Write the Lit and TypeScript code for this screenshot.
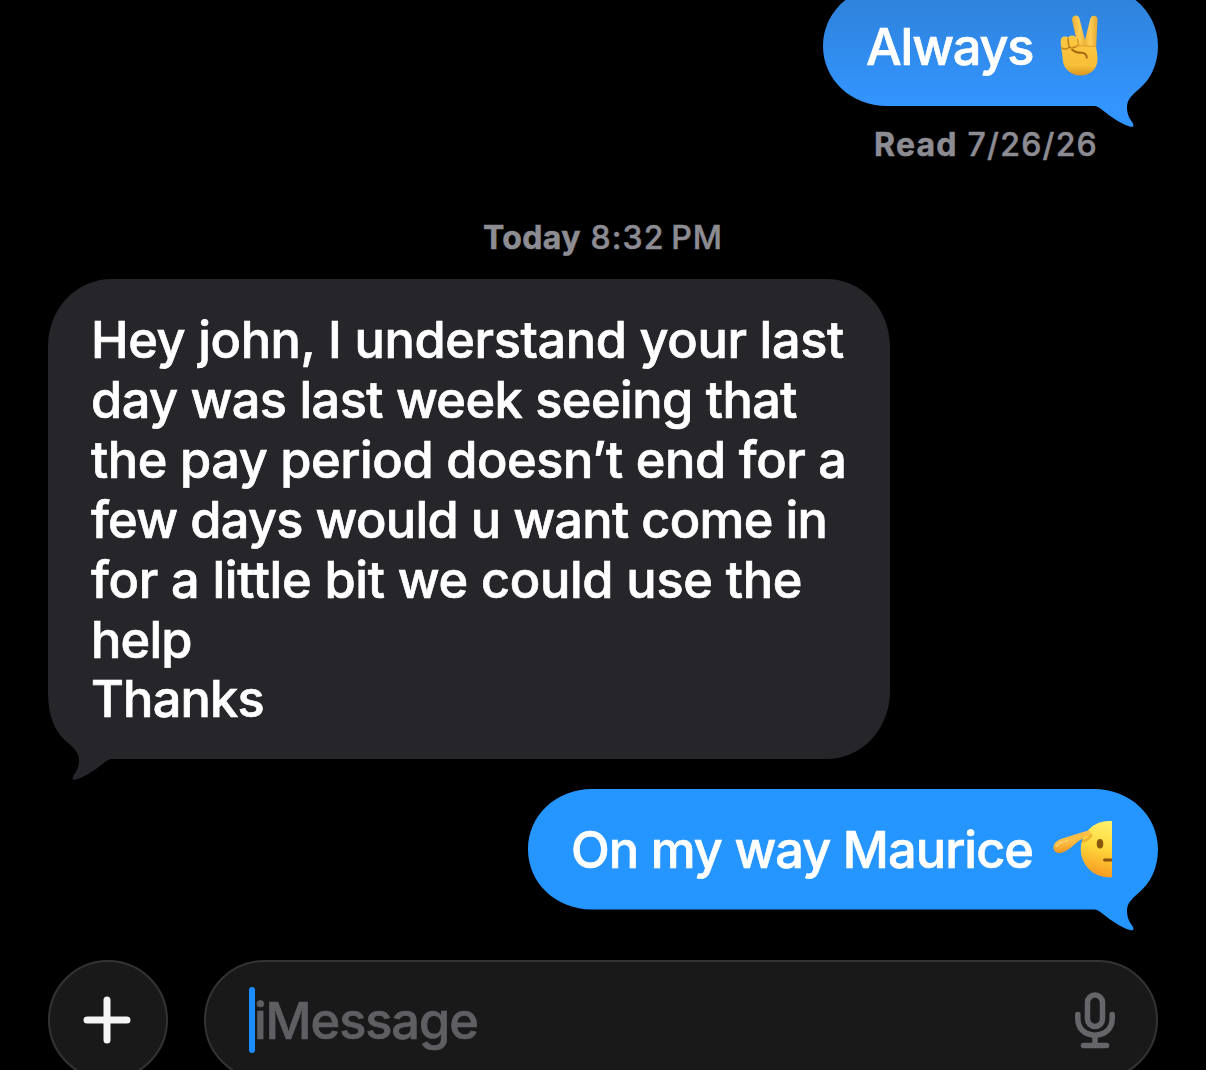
import { LitElement, html, svg, css, nothing } from 'lit';
import { customElement, property } from 'lit/decorators.js';
import { styleMap } from 'lit/directives/style-map.js';

interface Line {
  text: string;
  // tracking in px
  spacing: number;
}

const victory = svg`
  <defs>
    <linearGradient id="skin" x1="0" y1="0" x2="0" y2="1">
      <stop offset="0" stop-color="#fbc843" />
      <stop offset="0.75" stop-color="#f8bf38" />
      <stop offset="1" stop-color="#d99422" />
    </linearGradient>
    <linearGradient id="finger" x1="0" y1="0" x2="1" y2="0">
      <stop offset="0" stop-color="#ecaf35" />
      <stop offset="0.5" stop-color="#fdce55" />
      <stop offset="1" stop-color="#e8a830" />
    </linearGradient>
  </defs>
  <path d="M24 38L31.300 8.800c.6-2.200 2-3.300 4.100-3.100s3.300 1.900 3.100 4.200L37 41z" fill="url(#finger)" />
  <path d="M13.200 10.500c-.5-2.500.6-4.300 2.600-4.800s4 .6 4.700 3L28 38l-8.500 1z" fill="url(#finger)" />
  <path d="M1.700 31.500c0-3.200 1.300-4.900 4.100-4.900 1.400 0 2.400.3 3.300 1 .9-1.500 2.200-2.200 3.900-2.200 2.700 0 4.400 1.200 5.100 3.600l1.400 6.500 17 .5c1.300 3.500 2 8.500 2 13.500C38.500 59.500 30.500 65.500 21.500 65.500S4.500 59.500 3.800 50C3.500 44 1.900 39 1.700 31.500z" fill="url(#skin)" />
  <path d="M9.200 28.500c-.5 2.700 0 5.500 1 8.300M3 38c2 1.400 5 1.400 7.200-.7 2.900.7 6.500.4 8.300-1.800" fill="none" stroke="#b87818" stroke-width="1.400" stroke-linecap="round" />
  <path d="M18.600 29.500l1.300 6" fill="none" stroke="#d9921b" stroke-width="1.200" stroke-linecap="round" />
  <path d="M12.500 37.500c3-2 7-1.900 10.500-1.700 5 .3 9 .9 13.500.2" fill="none" stroke="#dfa02a" stroke-width="1.100" stroke-linecap="round" />
  <path d="M13 39.500c2.700 2.800 6 3.300 9.500 3.300 3.500.1 5 1.700 5.300 4.900" fill="none" stroke="#a56a14" stroke-width="2" stroke-linecap="round" />
`;

// Only the left half of the face is shown, cut along a straight edge.
const salute = svg`
  <defs>
    <linearGradient id="face" x1="0.4" y1="0" x2="0.15" y2="1">
      <stop offset="0" stop-color="#fff06a" />
      <stop offset="0.45" stop-color="#ffd83c" />
      <stop offset="1" stop-color="#f8931e" />
    </linearGradient>
    <linearGradient id="arm" x1="0.3" y1="0" x2="0.5" y2="1">
      <stop offset="0" stop-color="#ffc24a" />
      <stop offset="0.55" stop-color="#fdbb42" />
      <stop offset="1" stop-color="#e98f1b" />
    </linearGradient>
    <clipPath id="half"><rect width="60" height="72" /></clipPath>
  </defs>
  <g clip-path="url(#half)">
    <circle cx="57" cy="35.200" r="28.300" fill="url(#face)" />
    <ellipse cx="48" cy="29.800" rx="3.300" ry="4.800" fill="#8a560c" />
    <path d="M52.500 46h10" stroke="#8a500f" stroke-width="2.800" stroke-linecap="round" />
  </g>
  <path d="M31 27c3.500-.7 6.300-2.700 8-6" fill="none" stroke="#e08a1a" stroke-width="3" stroke-linecap="round" opacity="0.5" />
  <path d="M1.500 33.500C1.500 29 5.500 26 11 24.300L21.500 21l13-4c2.200-.6 3.500-.3 3.900.8.500 1.500-.4 3-2.400 3.900-3.200 1.500-6 3-8.500 4.800-4 3-7 6-11 8.800-2.600 1.900-5.300 3.600-8.500 3.700-3.900.1-6.500-1.800-6.500-5.500z" fill="url(#arm)" />
  <path d="M4.500 32.500c2-3.500 6.500-5 11-5.800" fill="none" stroke="#ffdc80" stroke-width="1.800" stroke-linecap="round" opacity="0.6" />
`;

/**
 * @slot - Trailing emoji
 */
@customElement('message-bubble')
export class MessageBubble extends LitElement {
  static override styles = css`
    :host {
      position: relative;
      display: block;
      box-sizing: border-box;
      padding: 31px 43px 0;
      color: #fff;
    }

    .shape {
      position: absolute;
      inset: 0;
      overflow: visible;
    }

    .text {
      position: relative;
      display: flex;
      align-items: flex-start;
      justify-content: space-between;
    }

    .line {
      display: block;
      font-size: 50.5px;
      font-weight: 500;
      line-height: 59.9px;
      white-space: nowrap;
      -webkit-text-stroke: 0.7px currentColor;
    }
  `;

  @property({ attribute: false }) lines: Line[] = [];
  @property({ type: Number }) width = 0;
  @property({ type: Number }) height = 0;
  @property({ type: String }) from = '#26252a';
  @property({ type: String }) to = '#26252a';
  @property({ type: Boolean }) received = false;

  // Outline with its tail at the bottom right corner.
  private _outline() {
    const w = this.width;
    const h = this.height;
    const ry = Math.min(h / 2, 68);
    const side = ry * 0.44;
    return `M64 0H${w - 64}C${w - 28} 0 ${w} ${side} ${w} ${ry}V${h - ry}
      C${w} ${h - 41} ${w - 8} ${h - 26} ${w - 19} ${h - 17}
      C${w - 27} ${h - 10} ${w - 31} ${h - 6} ${w - 31} ${h + 1}
      C${w - 31} ${h + 9} ${w - 28} ${h + 13} ${w - 25.5} ${h + 16.5}
      C${w - 23.5} ${h + 20} ${w - 25} ${h + 21.5} ${w - 28} ${h + 20.5}
      C${w - 38} ${h + 18} ${w - 52} ${h + 7} ${w - 57} ${h + 3}
      C${w - 60} ${h + 0.5} ${w - 62} ${h} ${w - 66} ${h}
      H64C28 ${h} 0 ${h - side} 0 ${h - ry}V${ry}C0 ${side} 28 0 64 0Z`;
  }

  override render() {
    return html`
      <svg class="shape" width=${this.width} height=${this.height} aria-hidden="true">
        <defs>
          <linearGradient id="fill" x1="0" y1="0" x2="0" y2="1">
            <stop offset="0.1" stop-color=${this.from} />
            <stop offset="0.85" stop-color=${this.to} />
          </linearGradient>
        </defs>
        <path
          d=${this._outline()}
          fill="url(#fill)"
          transform=${this.received ? `translate(${this.width} 0) scale(-1 1)` : nothing}
        />
      </svg>
      <div class="text">
        <div>
          ${this.lines.map(
            (line) => html`<span class="line" style=${styleMap({ letterSpacing: `${line.spacing}px` })}>${line.text}</span>`
          )}
        </div>
        <slot></slot>
      </div>
    `;
  }
}

@customElement('app-root')
export class AppRoot extends LitElement {
  static override styles = css`
    :host {
      display: flex;
      flex-direction: column;
      box-sizing: border-box;
      width: 1206px;
      height: 1070px;
      padding: 0 48px;
      overflow: hidden;
      background: #000;
      font-family: Inter, "Liberation Sans", sans-serif;
    }

    message-bubble {
      flex: none;
    }

    .first {
      align-self: flex-end;
      width: 335px;
      height: 120px;
      margin-top: -14px;
    }

    .incoming {
      width: 842px;
      height: 480px;
      margin-top: 21px;
    }

    .reply {
      align-self: flex-end;
      width: 630px;
      height: 120.5px;
      margin-top: 29.5px;
    }

    .emoji {
      flex: none;
      margin-top: -7px;
    }

    .first .emoji {
      margin-right: -4px;
    }

    .reply .emoji {
      margin-top: -6px;
      margin-right: 3px;
    }

    .meta {
      flex: none;
      font-size: 32px;
      font-weight: 500;
      line-height: 40px;
      color: #8d8c93;
      white-space: nowrap;
      letter-spacing: 1.1px;
      -webkit-text-stroke: 0.5px currentColor;
    }

    .meta b {
      font-weight: 700;
    }

    .read {
      margin: 19px 60px 0 0;
      text-align: right;
      letter-spacing: 1.25px;
    }

    .date {
      margin-top: 53px;
      text-align: center;
    }

    .date b {
      letter-spacing: 0.4px;
    }

    .composer {
      display: flex;
      flex: none;
      gap: 36px;
      margin-top: 51px;
    }

    .add,
    .field {
      box-sizing: border-box;
      height: 120px;
      border: 2px solid #333335;
      border-radius: 60px;
      background: #191919;
    }

    .add {
      display: grid;
      place-items: center;
      width: 120px;
      padding: 0 3px 0 0;
    }

    .field {
      display: flex;
      flex: 1;
      align-items: center;
      padding: 0 41px 0 43px;
    }

    .caret {
      width: 6px;
      height: 66px;
      margin-top: -1px;
      border-radius: 3px;
      background: #1b8dff;
    }

    .placeholder {
      flex: 1;
      margin-left: -1px;
      font-size: 50.5px;
      font-weight: 500;
      color: #5f5f63;
      letter-spacing: -1.1px;
      -webkit-text-stroke: 0.7px currentColor;
    }
  `;

  private _first: Line[] = [{ text: 'Always', spacing: -1.2 }];

  private _incoming: Line[] = [
    { text: 'Hey john, I understand your last', spacing: -0.4 },
    { text: 'day was last week seeing that', spacing: -0.55 },
    { text: 'the pay period doesn’t end for a', spacing: -0.44 },
    { text: 'few days would u want come in', spacing: -0.69 },
    { text: 'for a little bit we could use the', spacing: -0.33 },
    { text: 'help', spacing: -0.8 },
    { text: 'Thanks', spacing: -0.85 },
  ];

  private _reply: Line[] = [{ text: 'On my way Maurice', spacing: -0.95 }];

  override render() {
    return html`
      <message-bubble class="first" .lines=${this._first} width="335" height="120" from="#2f83dc" to="#3395ff">
        <svg class="emoji" width="60" height="72">${victory}</svg>
      </message-bubble>
      <div class="meta read"><b>Read</b> 7/26/26</div>

      <div class="meta date"><b>Today</b> 8:32\u202fPM</div>
      <message-bubble class="incoming" .lines=${this._incoming} width="842" height="480" received></message-bubble>

      <message-bubble class="reply" .lines=${this._reply} width="630" height="120.5" from="#2595ff" to="#2595ff">
        <svg class="emoji" width="60" height="72">${salute}</svg>
      </message-bubble>

      <div class="composer">
        <button class="add" aria-label="Add">
          <svg width="48" height="48" viewBox="0 0 48 48">
            <path d="M24 4v40M4 24h40" stroke="#f4f4f5" stroke-width="7" stroke-linecap="round" />
          </svg>
        </button>
        <div class="field">
          <span class="caret"></span>
          <span class="placeholder">iMessage</span>
          <svg width="40" height="58" viewBox="0 0 40 58" fill="none" stroke="#66666a" stroke-width="5.500" stroke-linecap="round">
            <rect x="12.500" y="4" width="15" height="31.500" rx="7.500" />
            <path d="M2.800 23.500v4c0 10 7 16.700 17.200 16.700s17.200-6.700 17.200-16.700v-4M20 44.500V54M8.500 54.500h23" />
          </svg>
        </div>
      </div>
    `;
  }
}
